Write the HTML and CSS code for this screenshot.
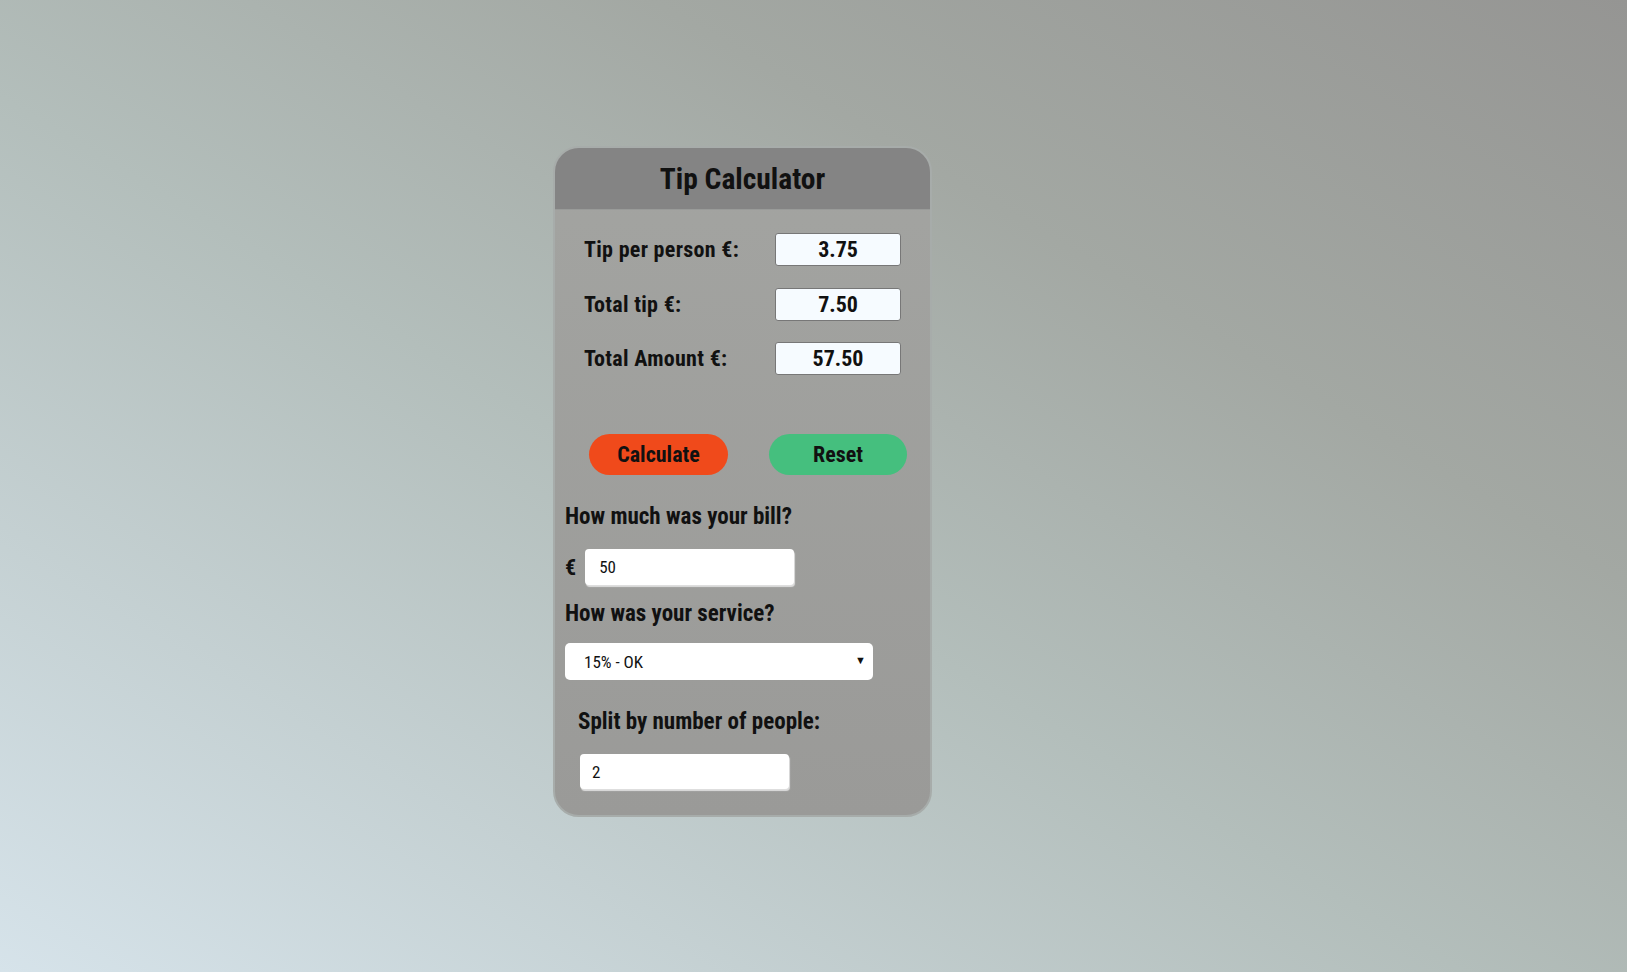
FILE: index.html
```html
<!DOCTYPE html>
<html lang="en">
<head>
<meta charset="utf-8">
<title>Tip Calculator</title>
<link rel="stylesheet" href="styles.css">
</head>
<body>
<div class="page">
  <div class="card">
    <div class="card-header"><h1 class="title">Tip Calculator</h1></div>
    <div class="card-body">
      <div class="results">
        <span class="res-label">Tip per person €:</span>
        <span class="res-box">3.75</span>
        <span class="res-label">Total tip €:</span>
        <span class="res-box">7.50</span>
        <span class="res-label">Total Amount €:</span>
        <span class="res-box">57.50</span>
      </div>
      <div class="buttons">
        <button class="btn btn-calc">Calculate</button>
        <button class="btn btn-reset">Reset</button>
      </div>
      <p class="question">How much was your bill?</p>
      <div class="bill-row">
        <span class="euro">€</span>
        <input class="field" type="text" value="50">
      </div>
      <p class="question q-service">How was your service?</p>
      <div class="select-wrap">
        <select class="select">
          <option>15% - OK</option>
        </select>
        <span class="arrow">▼</span>
      </div>
      <p class="question q-split">Split by number of people:</p>
      <input class="field field-split" type="text" value="2">
    </div>
  </div>
</div>
</body>
</html>
```
FILE: styles.css
```css
* { box-sizing: border-box; }
html, body { margin: 0; height: 100%; }
body {
  background: linear-gradient(to top right, #d6e3ea 0%, #b3bebb 45%, #a3a8a3 70%, #959593 100%);
  font-family: "Roboto Condensed", "Liberation Sans Narrow", Roboto, sans-serif;
  font-stretch: condensed;
  color: #111;
}
.page {
  padding: 146px 0 0 553px;
}
.card {
  width: 379px;
  border: 2px solid #a7acaa;
  border-radius: 26px;
  overflow: hidden;
  background: linear-gradient(#a3a4a1, #9a9a98);
}
.card-header {
  height: 62px;
  background: #848484;
  display: flex;
  align-items: center;
  justify-content: center;
  border-bottom: 1px solid #999b99;
}
.title {
  margin: 0;
  font-size: 29.5px;
  font-weight: 700;
  color: #111;
}
.card-body {
  padding: 23px 0 26px 0;
}
.results {
  display: grid;
  grid-template-columns: 191px 126px;
  row-gap: 21.5px;
  padding-left: 29px;
  align-items: center;
}
.res-label {
  font-size: 22px;
  font-weight: 700;
  letter-spacing: 0.3px;
}
.res-box {
  height: 33px;
  border: 1px solid #777;
  border-radius: 3px;
  background: #f6fbff;
  font-size: 22px;
  font-weight: 700;
  display: flex;
  align-items: center;
  justify-content: center;
}
.buttons {
  display: flex;
  gap: 41px;
  padding-left: 34px;
  margin-top: 59px;
}
.btn {
  height: 41px;
  width: 139px;
  border: none;
  border-radius: 21px;
  font-family: inherit;
  font-stretch: condensed;
  font-size: 22px;
  font-weight: 700;
  color: #111;
}
.btn-calc { background: #f04a1b; }
.btn-reset { background: #45bf7e; width: 138px; }
.question {
  margin: 0;
  font-size: 23px;
  font-weight: 700;
  line-height: 26px;
  padding-left: 10px;
}
.buttons + .question { margin-top: 29px; }
.bill-row {
  display: flex;
  align-items: center;
  gap: 9px;
  padding-left: 10px;
  margin-top: 19px;
}
.euro {
  font-size: 22px;
  font-weight: 700;
}
.field {
  width: 209px;
  height: 36px;
  border: none;
  border-radius: 4px;
  background: #fff;
  box-shadow: 1px 2px 1px #dedede;
  font-family: inherit;
  font-stretch: condensed;
  font-size: 17px;
  padding: 0 14px;
  color: #111;
}
.q-service { margin-top: 16px; }
.select-wrap {
  position: relative;
  width: 308px;
  margin: 16px 0 0 10px;
}
.select {
  appearance: none;
  -webkit-appearance: none;
  width: 308px;
  height: 37px;
  border: none;
  border-radius: 5px;
  background: #fff;
  font-family: inherit;
  font-stretch: condensed;
  font-size: 17px;
  padding: 0 19px;
  color: #111;
}
.arrow {
  position: absolute;
  right: 7px;
  top: 11px;
  font-size: 11px;
  color: #111;
  pointer-events: none;
}
.q-split { margin-top: 29px; padding-left: 23px; }
.field-split {
  display: block;
  height: 35px;
  margin: 19px 0 0 25px;
  padding: 0 12px;
}
```
